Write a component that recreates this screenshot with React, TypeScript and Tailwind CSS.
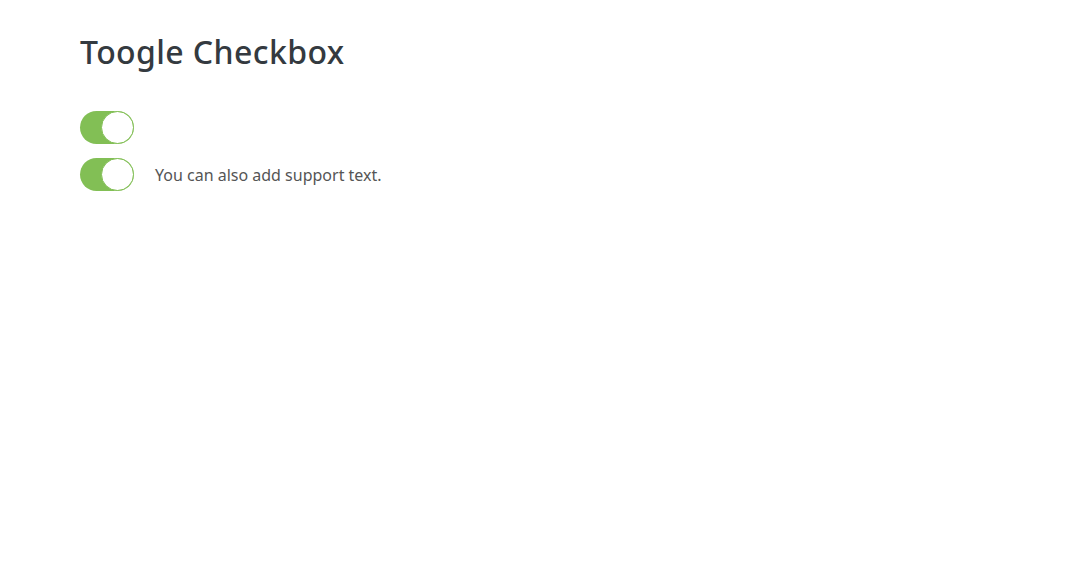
import React from "react";

function Toggle() {
  return (
    <div className="relative h-[33px] w-[54px] shrink-0 rounded-full bg-[#82bf55]">
      <div className="absolute right-0 top-0 h-[33px] w-[33px] rounded-full border border-[#82bf55] bg-white" />
    </div>
  );
}

export default function App() {
  return (
    <div className="min-h-[584px] w-full bg-white pl-[80px] pt-[30px]" style={{ fontFamily: '"Noto Sans", "Open Sans", sans-serif' }}>
      <h1 className="text-[32px] font-medium leading-[44px] tracking-[0.4px] text-[#343a40]">Toogle Checkbox</h1>
      <div className="mt-[37px] flex flex-col gap-[14px]">
        <div className="flex items-center">
          <Toggle />
        </div>
        <div className="flex items-center gap-[21px]">
          <Toggle />
          <span className="text-[16px] text-[#555]">You can also add support text.</span>
        </div>
      </div>
    </div>
  );
}
